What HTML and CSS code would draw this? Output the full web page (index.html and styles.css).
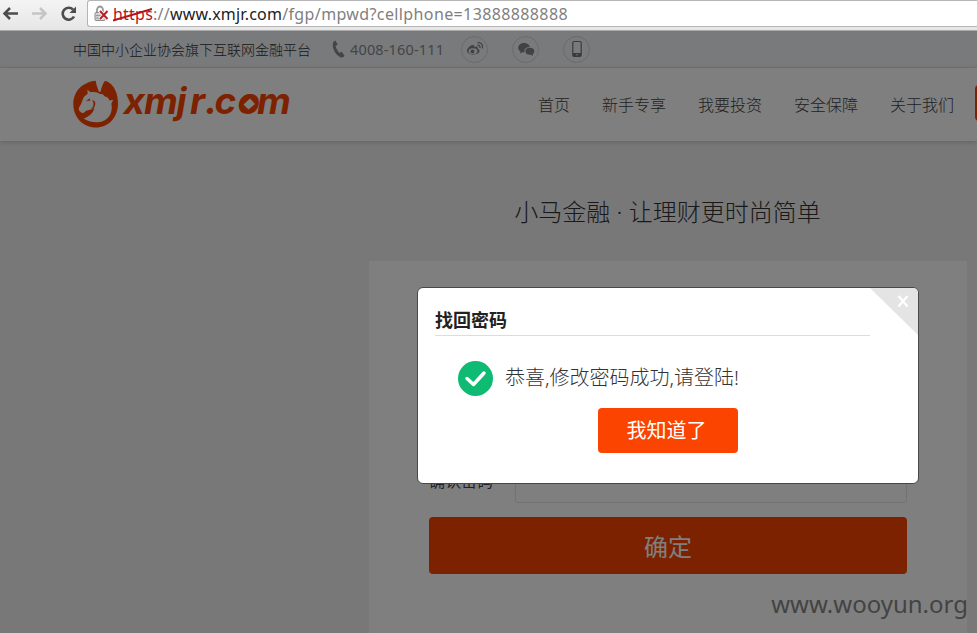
FILE: index.html
```html
<!DOCTYPE html>
<html lang="zh-CN">
<head>
<meta charset="utf-8">
<title>小马金融</title>
<link rel="stylesheet" href="styles.css">
</head>
<body>
<div class="browser">
  <svg class="nav-icons" width="87" height="30" viewBox="0 0 87 30" fill="none">
    <path d="M18 13.500H5M10 8L4.500 13.500L10 19" stroke="#4d4d4d" stroke-width="2.500"/>
    <path d="M32 13.500H45M40 8L45.500 13.500L40 19" stroke="#c5c5c5" stroke-width="2.500"/>
    <path d="M73 9.500A6 6 0 1 0 74 16.500" stroke="#4d4d4d" stroke-width="2.600"/>
    <path d="M76 6.500V13H69.500Z" fill="#4d4d4d"/>
  </svg>
  <div class="address">
    <svg class="lock" width="15" height="18" viewBox="0 0 15 18" fill="none">
      <path d="M3 8V5A3 3.500 0 0 1 9 5V8" stroke="#999" stroke-width="1.800"/>
      <rect x="1" y="7.500" width="10" height="8" rx="1" fill="#d2d2d2" stroke="#8d8d8d"/>
      <path d="M2 10.500H8M2 13H8" stroke="#999"/>
      <path d="M6 6L13.500 14M13.500 6L6 14" stroke="#fff" stroke-width="4"/>
      <path d="M6 6L13.500 14M13.500 6L6 14" stroke="#b8202a" stroke-width="2"/>
    </svg>
    <span class="url"><span class="scheme">https<svg class="strike" width="41" height="16" viewBox="0 0 41 16"><path d="M0 13.500L39 2" stroke="#b3141e" stroke-width="2"/></svg></span>://<span class="host">www.xmjr.com</span><span class="path">/fgp/mpwd?cellphone=13888888888</span></span>
  </div>
</div>
<div class="page">
  <div class="topbar">
    <span class="org">中国中小企业协会旗下互联网金融平台</span>
    <svg class="phone" width="14" height="18" viewBox="0 0 14 18"><path d="M3.500 0.500L1.200 2C-.8 8 4 16 10 17.800L12.700 15.900L9.700 11.800L7.600 13C5.500 11 4 8.500 3.600 5.800L5.700 4.700Z" fill="#8a8a8a"/></svg>
    <span class="tel">4008-160-111</span>
    <span class="round"><svg width="18" height="16" viewBox="0 0 18 16" fill="none">
      <path d="M7 4C3.500 4.500 1 7.500 1 10C1 14.500 13.500 15 13.500 9.700C13.500 8.500 12.500 8 11.700 7.700C12.200 5.500 10.500 5 8.200 6C8.400 4.500 8.100 3.900 7 4Z" fill="#858585"/>
      <ellipse cx="7" cy="10.200" rx="4.400" ry="2.900" fill="#f3f4f8"/><circle cx="6.500" cy="10.400" r="2" fill="#858585"/>
      <path d="M11.500 4.300C13.500 4 14.300 5.300 13.900 7M11.500 1.700C15.500 1 17.500 4.500 16.200 7.500" stroke="#858585" stroke-width="1.300"/></svg></span>
    <span class="round"><svg width="18" height="16" viewBox="0 0 18 16">
      <path d="M7 2C10 2 12.500 3.700 12.800 6C9 6 6.800 8.500 7.500 11.300L5.500 11.200L3 12.500L3.500 10.500C-1 7.500 1.500 2 7 2Z" fill="#858585"/>
      <path d="M12.500 6.700C18 6.700 18.500 11.500 15.700 13L16 15L13.800 13.800C7 14.500 6.500 7 12.500 6.700Z" fill="#858585"/></svg></span>
    <span class="round"><svg width="12" height="18" viewBox="0 0 12 18" fill="none"><rect x="1.800" y="1.500" width="8.400" height="15" rx="1.200" stroke="#777" stroke-width="1.200"/><path d="M2 13H10V16H2Z" fill="#777"/><circle cx="6" cy="14.700" r=".8" fill="#eee"/></svg></span>
  </div>
  <div class="header">
    <svg class="logo" width="222" height="52" viewBox="0 0 222 52">
      <g transform="scale(.3333) translate(-9 -8.500)">
        <path d="M77 14C79 26 82 36 87 47L92 47C94 35 98 24 105 14C132 22 145 52 144 84C143 124 115 154 78 154C40 154 10 124 10 84C10 45 38 18 77 14Z" fill="#fb4400"/>
        <path d="M52 41L62 48C73 46 83 48 88 53L98 54L105 61C112 62 117 67 118 73L130 71L124 82C131 112 112 137 84 138C66 139 51 134 41 127C58 121 71 110 73 94C65 102 55 101 48 104C44 109 38 114 31 107C25 103 25 96 29 91C36 82 37 70 42 62L53 53Z" fill="#fff"/>
        <path d="M48 75L59 66L61 73Z" fill="#fb4400"/>
        <path d="M66 72C75 72 79 81 74 90C71 96 67 98 62 98C71 92 74 83 66 72Z" fill="#fb4400"/>
      </g>
      <text class="wordmark" x="50.500 71 103.500 117 132 141.500 164.500 184" y="35">xmjr.com</text>
      <ellipse cx="176" cy="25" rx="5.500" ry="7" fill="#fb4400"/>
      <path d="M177 19.500L182 25L175.500 30.500L170.500 25.500Z" fill="#fff"/>
    </svg>
    <nav class="menu"><span>首页</span><span>新手专享</span><span>我要投资</span><span>安全保障</span><span>关于我们</span></nav>
    <span class="login"></span>
  </div>
  <main class="main">
    <h1 class="slogan">小马金融 · 让理财更时尚简单</h1>
    <div class="card">
      <div class="field"><label>确认密码</label><span class="input"></span></div>
      <div class="submit">确定</div>
    </div>
  </main>
  <div class="overlay"></div>
  <div class="dialog">
    <svg class="corner" width="48" height="48" viewBox="0 0 48 48"><path d="M0 0H48V47Z" fill="#e4e4e4"/><path d="M28.500 8L37.500 18.500M37.500 8L28.500 18.500" stroke="#fff" stroke-width="2.200"/></svg>
    <h2 class="title">找回密码</h2>
    <div class="message">
      <svg width="35" height="35" viewBox="0 0 35 35"><circle cx="17.500" cy="17.500" r="17.500" fill="#0fba72"/><path d="M9 17.500L15.500 23.500L26 12" fill="none" stroke="#fff" stroke-width="3.500" stroke-linecap="round" stroke-linejoin="round"/></svg>
      <span>恭喜,修改密码成功,请登陆!</span>
    </div>
    <div class="ok">我知道了</div>
  </div>
  <div class="watermark">www.wooyun.org</div>
</div>
</body>
</html>
```
FILE: styles.css
```css
* { box-sizing: border-box; }
body {
  margin: 0;
  width: 977px;
  height: 633px;
  overflow: hidden;
  font-family: "Noto Sans", "Noto Sans CJK SC", sans-serif;
}
svg { display: block; flex: none; }
.browser {
  height: 31px;
  display: flex;
  align-items: flex-start;
  background: linear-gradient(#f4f4f4, #e6e6e6);
  border-bottom: 1px solid #aaa;
}
.address {
  flex: 1;
  height: 27px;
  display: flex;
  align-items: center;
  padding-left: 6px;
  background: #fff;
  border: 1px solid #b5b5b5;
  border-right: 0;
  border-radius: 3px 0 0 3px;
}
.lock { margin-right: 4px; }
.url {
  font-size: 16px;
  line-height: 24px;
  letter-spacing: .22px;
  color: #808080;
  white-space: nowrap;
}
.host { color: #222; }
.path { letter-spacing: .38px; }
.scheme { position: relative; color: #b3141e; }
.strike { position: absolute; left: 0; top: 4px; }
.page {
  position: relative;
  height: 602px;
  overflow: hidden;
  background: #f0f0f0;
}
.topbar {
  height: 37px;
  display: flex;
  align-items: center;
  padding-left: 73px;
  background: #f3f4f8;
  border-bottom: 1px solid #e6e6e6;
}
.org { width: 259px; font-size: 14px; font-weight: 300; color: #333; white-space: nowrap; }
.tel { width: 111px; margin-left: 4px; font-size: 14.500px; letter-spacing: .15px; color: #8a8a8a; white-space: nowrap; }
.round {
  width: 27px;
  height: 27px;
  margin-right: 24px;
  display: flex;
  align-items: center;
  justify-content: center;
  border: 1px solid #d4d4d4;
  border-radius: 50%;
}
.header {
  height: 73px;
  display: flex;
  align-items: center;
  padding-left: 73px;
  background: #fff;
  box-shadow: 0 1px 5px rgba(0, 0, 0, .2);
}
.logo { overflow: visible; }
.wordmark {
  font: italic 700 37px Inter, sans-serif;
  fill: #fb4400;
}
.menu {
  display: flex;
  flex: none;
  gap: 32px;
  width: 437px;
  margin-left: 243px;
  margin-bottom: 1px;
  font-size: 16px;
  font-weight: 300;
  color: #444;
  white-space: nowrap;
}
.login { width: 20px; height: 36px; flex: none; background: #fb4400; border-radius: 4px; margin-bottom: 4px; }
.main { display: flex; flex-direction: column; padding-left: 369px; }
.slogan {
  width: 597px;
  margin: 53px 0 31px;
  text-align: center;
  font-size: 24px;
  font-weight: 300;
  line-height: 36px;
  color: #333;
}
.card { width: 598px; height: 380px; padding: 198px 60px 0; background: #fff; }
.field { display: flex; align-items: center; height: 44px; font-size: 16px; color: #444; }
.field label { width: 86px; margin-bottom: 2px; }
.input { flex: 1; height: 44px; border: 1px solid #e4e4e4; border-radius: 3px; }
.submit {
  height: 57px;
  margin-top: 14px;
  border-radius: 4px;
  background: #fb4400;
  color: #fff;
  font-size: 24px;
  line-height: 59px;
  text-align: center;
}
.overlay { position: absolute; inset: 0; background: rgba(0, 0, 0, .5); }
.dialog {
  position: absolute;
  left: 417px;
  top: 256px;
  width: 502px;
  height: 197px;
  padding: 16px 17px;
  border: 1px solid #484848;
  border-radius: 6px;
  background: #fff;
  overflow: hidden;
}
.corner { position: absolute; right: 0; top: 0; }
.title {
  width: 435px;
  height: 32px;
  margin: 0;
  border-bottom: 1px solid #ddd;
  font-size: 18px;
  line-height: 32px;
  color: #222;
}
.message {
  display: flex;
  align-items: center;
  gap: 12px;
  margin: 25px 0 12px 23px;
  font-size: 20px;
  font-weight: 300;
  line-height: 35px;
  color: #333;
}
.message span { margin-top: -3px; white-space: nowrap; }
.ok {
  width: 140px;
  height: 45px;
  margin-left: 163px;
  padding-right: 3px;
  border-radius: 4px;
  background: #fb4400;
  color: #fff;
  font-size: 20px;
  line-height: 45px;
  text-align: center;
}
.watermark {
  position: absolute;
  right: 9px;
  bottom: 12px;
  font-size: 24px;
  line-height: 34px;
  color: #434343;
}
```
